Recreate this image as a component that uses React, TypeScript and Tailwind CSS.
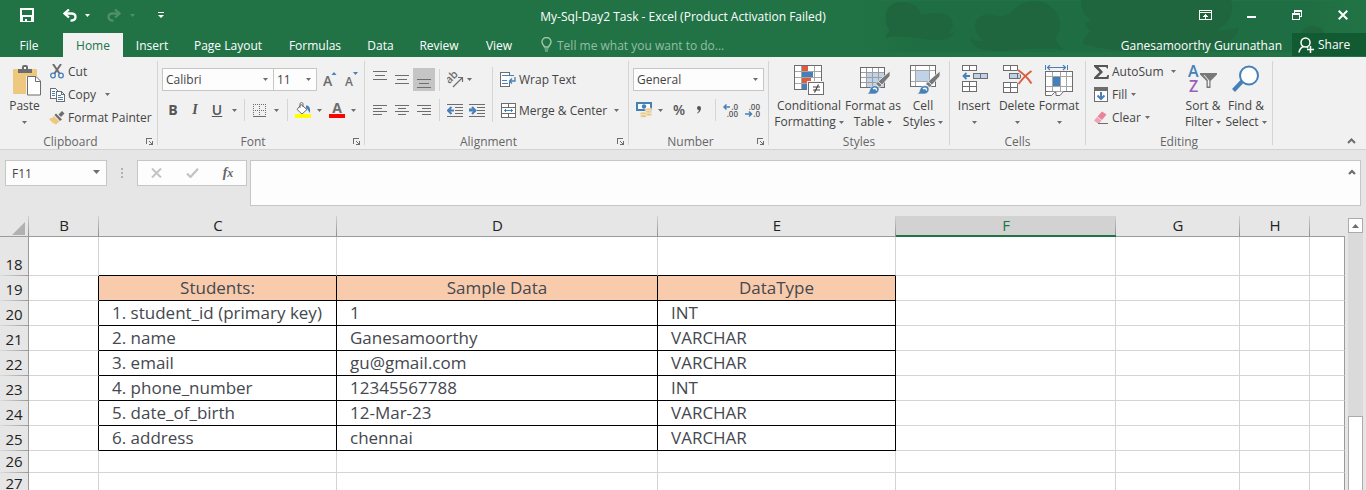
import type { ReactNode } from 'react';

type IconProps = { w: number; h: number; children: ReactNode; soft?: boolean; className?: string };

const GRAY = '#6d6d6d';
const BLUE = '#4680b9';
const TAN = '#edc87e';

function Icon({ w, h, children, soft, className = '' }: IconProps) {
  return (
    <svg
      aria-hidden="true"
      width={w}
      height={h}
      viewBox={`0 0 ${w} ${h}`}
      fill="none"
      shapeRendering={soft ? 'auto' : 'crispEdges'}
      className={`shrink-0 ${className}`}
    >
      {children}
    </svg>
  );
}

function Caret({ color = GRAY, className = '' }: { color?: string; className?: string }) {
  return (
    <Icon w={5} h={3} soft className={className}>
      <path d="M0 0h5L2.5 3z" fill={color} />
    </Icon>
  );
}

function CaretButton({ label, className = '' }: { label: string; className?: string }) {
  return (
    <button aria-label={label} className={`flex h-5 w-[5px] shrink-0 items-center justify-center ${className}`}>
      <Caret />
    </button>
  );
}

function IconButton({ label, children, className = '' }: { label: string; children: ReactNode; className?: string }) {
  return (
    <button aria-label={label} className={`flex shrink-0 items-center justify-center ${className}`}>
      {children}
    </button>
  );
}

function Sep({ className = 'h-[22px]' }: { className?: string }) {
  return <div className={`w-px shrink-0 bg-[#d5d5d5] ${className}`} />;
}

function Lines({ widths, align }: { widths: number[]; align: 'l' | 'c' | 'r' }) {
  const pitch = widths.length === 3 ? 4 : 3;
  return (
    <Icon w={14} h={(widths.length - 1) * pitch + 1}>
      {widths.map((w, i) => (
        <rect key={i} x={align === 'l' ? 0 : align === 'r' ? 14 - w : (14 - w) / 2} y={i * pitch} width={w} height="1" fill={GRAY} />
      ))}
    </Icon>
  );
}

function Group({
  title,
  launcher,
  children,
  className,
}: {
  title: string;
  launcher?: boolean;
  children: ReactNode;
  className: string;
}) {
  return (
    <section aria-label={title} className={`flex shrink-0 flex-col ${className}`}>
      <div className="flex h-[88px]">
        <div className="flex h-[76px] min-w-0 flex-1">{children}</div>
        <div className="mt-1 h-[84px] w-px bg-[#d5d5d5]" />
      </div>
      <div className="-mt-3 flex h-4 items-center pr-px">
        <span className="flex-1 pt-px text-center text-[#666666]">{title}</span>
        {launcher && (
          <button aria-label={`${title} settings`} className="flex w-4 justify-center">
            <Icon w={7} h={7}>
              <path d="M.5 6V.5H6" stroke={GRAY} />
              <path d="M7 3v4H3V6h2V5H4V4H3V3h1v1h1v1h1V3z" fill={GRAY} />
            </Icon>
          </button>
        )}
      </div>
    </section>
  );
}

function SmallButton({ icon, label, caret, gap = 'ml-1' }: { icon: ReactNode; label: string; caret?: boolean; gap?: string }) {
  return (
    <button className="flex h-[23px] items-center whitespace-nowrap">
      <span className="flex w-4 justify-center">{icon}</span>
      <span className="ml-[3px]">{label}</span>
      {caret && <Caret className={gap} />}
    </button>
  );
}

function BigButton({ icon, lines, className }: { icon: ReactNode; lines: [string, string?]; className: string }) {
  return (
    <button className={`flex shrink-0 flex-col items-center pt-2 leading-4 whitespace-nowrap ${className}`}>
      <span className="flex h-[33px] items-start justify-center">{icon}</span>
      <span>{lines[0]}</span>
      <span className="flex h-4 items-center justify-center gap-[3px]">
        {lines[1]}
        <Caret />
      </span>
    </button>
  );
}

function Combo({ label, value, options, className }: { label: string; value: string; options: string[]; className: string }) {
  return (
    <div className={`grid h-[23px] shrink-0 grid-cols-1 items-center border border-[#c6c6c6] bg-[#fdfdfd] ${className}`}>
      <select
        aria-label={label}
        defaultValue={value}
        className="col-start-1 row-start-1 h-full w-full appearance-none bg-transparent pl-[3px] text-xs text-[#444444] outline-none"
      >
        {options.map((o) => (
          <option key={o}>{o}</option>
        ))}
      </select>
      <Caret className="pointer-events-none col-start-1 row-start-1 mr-[5px] justify-self-end" />
    </div>
  );
}

/* ---------- icons ---------- */

const SaveIcon = (
  <Icon w={14} h={14}>
    <path d="M0 0h14v14H0zM2 2v5h10V2z" fill="#fff" fillRule="evenodd" />
    <path d="M3 9h8v4H3z" fill="#217346" />
    <path d="M5 11h2v3H5z" fill="#fff" />
  </Icon>
);

const UndoIcon = (
  <Icon w={14} h={13} soft>
    <path d="M1.5 4.5h6.8c2.4 0 4.2 1.2 4.2 3.5S10.700 11.600 7.500 11.600" stroke="currentColor" strokeWidth="2.300" />
    <path d="M6 .5l-4.500 4 4.500 4" stroke="currentColor" strokeWidth="2.300" />
  </Icon>
);

const PasteIcon = (
  <Icon w={32} h={32} soft>
    <rect x="4" y="4" width="24" height="25" rx="1" fill={TAN} />
    <path d="M9 8V4h4V2a2 2 0 0 1 2-2h2a2 2 0 0 1 2 2v2h4v4z" fill={GRAY} />
    <rect x="15" y="2" width="2" height="2" fill="#fff" />
    <path d="M17 11h10l5 5v15H17z" fill="#f1f1f1" />
    <path d="M18.500 11.500h8.500l4.500 4.500v14H18.500z" fill="#fff" stroke={GRAY} />
    <path d="M26.500 11.500v5h5" stroke={GRAY} />
  </Icon>
);

const CutIcon = (
  <Icon w={14} h={15} soft>
    <path d="M3 0l6.500 9.500M11 0L4.500 9.500" stroke={GRAY} strokeWidth="2" />
    <circle cx="3" cy="11.500" r="2.300" stroke={BLUE} strokeWidth="1.300" />
    <circle cx="11" cy="11.500" r="2.300" stroke={BLUE} strokeWidth="1.300" />
  </Icon>
);

const CopyIcon = (
  <Icon w={15} h={14}>
    <path d="M.5.5h5l3 3v7h-8z" fill="#fff" stroke={GRAY} />
    <path d="M2 3.500h3M2 5.500h3M2 7.500h3" stroke={BLUE} />
    <path d="M6.500 3.500h5l3 3v7h-8z" fill="#fff" stroke={GRAY} />
    <path d="M11.500 3.500v3h3" stroke={GRAY} />
    <path d="M8 7.500h3M8 9.500h5M8 11.500h5" stroke={BLUE} />
  </Icon>
);

const PainterIcon = (
  <Icon w={16} h={14} soft>
    <path d="M9.500 3.500L13 0l2.500 2.500-3.500 3.500z" fill={GRAY} />
    <path d="M7 2.500l6 6-2 1.500-5.500-6z" fill={GRAY} />
    <path d="M5 5l5.500 5.500L7 13.500C4 12.500 1.500 10.500 0 7.500 2 7.500 3.500 7 5 5z" fill={TAN} />
  </Icon>
);

const BordersIcon = (
  <Icon w={13} h={13}>
    <path d="M.5 0v12M6.500 0v12M12.500 0v12M0 .5h13M0 6.500h13" stroke={GRAY} strokeDasharray="1 1" />
    <path d="M0 12.500h13" stroke={GRAY} />
  </Icon>
);

const FillColorIcon = (
  <Icon w={16} h={16} soft>
    <path d="M6 2.500l6 5L7 12 2 7.500z" fill="#fff" stroke={GRAY} />
    <path d="M5 6V2c0-2 3-2 3 0v3" stroke={GRAY} />
    <path d="M11 3.500c3.500 0 4.500 2.500 4 7.500-1-1-1.500-3-4-5z" fill={BLUE} />
    <rect y="12" width="16" height="4" fill="#ffff00" />
  </Icon>
);

const OrientationIcon = (
  <Icon w={17} h={16} soft>
    <text x="0" y="9" transform="rotate(-45 5 8)" fontSize="11" fontWeight="600" fontFamily="Open Sans, sans-serif" fill={GRAY}>
      ab
    </text>
    <path d="M6 15l9-9M11 5.500h4.500V10" stroke={GRAY} strokeWidth="1.200" />
  </Icon>
);

function IndentIcon({ right }: { right?: boolean }) {
  return (
    <Icon w={16} h={13}>
      <path d="M0 .5h16M8 3.500h8M8 6.500h8M8 9.500h8M0 12.500h16" stroke={GRAY} />
      {right ? (
        <path d="M0 5.500h3.500M3 3l3.500 3.500L3 10M0 6.500h6" stroke={BLUE} strokeWidth="2" shapeRendering="auto" />
      ) : (
        <path d="M7 6.500H1.500M4.500 3L1 6.500 4.500 10" stroke={BLUE} strokeWidth="2" shapeRendering="auto" />
      )}
    </Icon>
  );
}

const WrapIcon = (
  <Icon w={16} h={15} soft>
    <path d="M.5.5h9v14h-9z" stroke={GRAY} fill="#fff" shapeRendering="crispEdges" />
    <rect x="9" y="4" width="2" height="6" fill="#f1f1f1" />
    <path d="M2 3.500h12M2 8.500h5M2 11.500h6" stroke={BLUE} shapeRendering="crispEdges" />
    <path d="M15 5v4h-5M12 6.500L9.500 9l2.500 2.500" stroke={BLUE} strokeWidth="1.300" />
  </Icon>
);

const MergeIcon = (
  <Icon w={15} h={15}>
    <path d="M.5.5h14v14H.5zM.5 4.500h14M.5 10.500h14M7.500.5v4M7.500 10.500v4" fill="#fff" stroke={GRAY} />
    <path d="M3 7.500h9M4.500 6v3M10.500 6v3" stroke={BLUE} />
  </Icon>
);

const MoneyIcon = (
  <Icon w={17} h={16} soft>
    <path d="M0 0h16v9H0z" fill={BLUE} shapeRendering="crispEdges" />
    <path d="M2 2h12v5H2z" fill="#fff" />
    <circle cx="8" cy="4.500" r="2.200" fill={BLUE} />
    <ellipse cx="12.500" cy="7.500" rx="3.500" ry="1.600" fill={TAN} stroke="#f1f1f1" strokeWidth=".7" />
    <ellipse cx="12.500" cy="10" rx="3.500" ry="1.600" fill={TAN} stroke="#f1f1f1" strokeWidth=".7" />
    <ellipse cx="12.500" cy="12.500" rx="3.500" ry="1.600" fill={TAN} stroke="#f1f1f1" strokeWidth=".7" />
    <ellipse cx="7.500" cy="11.500" rx="3.500" ry="1.600" fill={TAN} stroke="#f1f1f1" strokeWidth=".7" />
    <ellipse cx="7.500" cy="14" rx="3.500" ry="1.600" fill={TAN} stroke="#f1f1f1" strokeWidth=".7" />
  </Icon>
);

function DecimalIcon({ decrease }: { decrease?: boolean }) {
  const font = { fontSize: 8, fontFamily: 'Open Sans, sans-serif', fontWeight: 600, fill: '#555555' };
  return (
    <Icon w={16} h={15} soft>
      {decrease ? (
        <>
          <text x="15" y="6.500" textAnchor="end" {...font}>.00</text>
          <text x="15" y="14" textAnchor="end" {...font}>.0</text>
          <path d="M0 11h6M4 8.500L6.500 11 4 13.500" stroke={BLUE} strokeWidth="1.500" />
        </>
      ) : (
        <>
          <text x="15" y="6.500" textAnchor="end" {...font}>.0</text>
          <text x="15" y="14" textAnchor="end" {...font}>.00</text>
          <path d="M7 4H1M3.500 1.500L1 4l2.500 2.500" stroke={BLUE} strokeWidth="1.500" />
        </>
      )}
    </Icon>
  );
}

const ConditionalIcon = (
  <Icon w={30} h={30}>
    <path d="M.5.5h27v24H.5z" fill="#fff" stroke={GRAY} />
    <path d="M7.500 1v23M20.500 1v23M1 6.500h26M1 12.500h26M1 18.500h26" stroke="#a6a6a6" />
    <path d="M8 1h6v5H8zM8 13h9v5H8z" fill="#dc5e3f" />
    <path d="M8 7h11v5H8zM8 19h5v5H8z" fill={BLUE} />
    <path d="M13 16h17v14H13z" fill="#f1f1f1" />
    <path d="M14.500 17.500h15v12h-15z" fill="#fff" stroke={GRAY} />
    <path d="M19 22h7M19 25h7M24.500 19.500l-4 8" stroke="#444" strokeWidth="1.200" shapeRendering="auto" />
  </Icon>
);

const Brush = (
  <g shapeRendering="auto">
    <path d="M30 6v5l-8 9-4-3.500z" fill="#787878" stroke="#f1f1f1" strokeWidth=".8" />
    <path d="M18 16.500l4 3.500-2 2.500-4.500-3.500z" fill="#787878" stroke="#f1f1f1" strokeWidth=".8" />
    <path d="M7 29c3-1 2-4 4-6.500 2-2.500 6-2.500 7.500 0 1.500 2.500-.5 6-4 6.500z" fill={BLUE} stroke="#f1f1f1" strokeWidth=".6" />
    <path d="M13 24c2-1.500 3.500-.5 3.500 1.500" stroke="#fff" strokeWidth="1.500" />
  </g>
);

const FormatTableIcon = (
  <Icon w={31} h={30} className="ml-[5px]">
    <path d="M.5 2.500h24v20H.5z" fill="#fff" stroke={GRAY} />
    <path d="M7 8h17v14H7z" fill="#bfd2e8" />
    <path d="M6.500 3v19M12.500 3v19M18.500 3v19M1 7.500h23M1 12.500h23M1 17.500h23" stroke="#9d9d9d" />
    {Brush}
  </Icon>
);

const CellStylesIcon = (
  <Icon w={31} h={30} className="ml-[5px]">
    <path d="M.5.5h25v21H.5z" fill="#fff" stroke={GRAY} />
    <path d="M5.500 1v20M19.500 1v20M1 5.500h24M1 16.500h24" stroke="#a6a6a6" />
    <path d="M6 6h13v10H6z" fill="#bfd2e8" />
    {Brush}
  </Icon>
);

const InsertIcon = (
  <Icon w={26} h={30} className="ml-[2px]">
    <path d="M.5.5h14v5H.5zM7.500.5v5M.5 16.500h14v10H.5zM7.500 16.500v10M.5 21.500h14" fill="#fff" stroke={GRAY} />
    <path d="M11.500 8.500h14v5h-14zM18.500 8.500v5" fill="#bfd2e8" stroke={GRAY} />
    <path d="M8 11H2M4.500 8L1.500 11l3 3" stroke={BLUE} strokeWidth="1.800" shapeRendering="auto" />
  </Icon>
);

const DeleteIcon = (
  <Icon w={30} h={30} className="ml-[2px]">
    <path d="M.5.5h14v5H.5zM7.500.5v5M.5 17.500h14v10H.5zM7.500 17.500v10M.5 22.500h14" fill="#fff" stroke={GRAY} />
    <path d="M6.500 8.500h11v5h-11zM14.500 8.500v5" fill="#bfd2e8" stroke={GRAY} />
    <path d="M15 5c5 3.500 10 8 13.500 13.500M28.500 6C24 9 20 13 15.500 19" stroke="#f1f1f1" strokeWidth="4" shapeRendering="auto" />
    <path d="M15 5c5 3.500 10 8 13.500 13.500M28.500 6C24 9 20 13 15.500 19" stroke="#dc5e3f" strokeWidth="2" shapeRendering="auto" />
  </Icon>
);

const FormatIcon = (
  <Icon w={29} h={32}>
    <path d="M.5 0v5M22.500 0v5" stroke={BLUE} />
    <path d="M2 2.500h19M5 0L2.500 2.500 5 5M18 0l2.500 2.500L18 5" stroke={BLUE} strokeWidth="1.200" shapeRendering="auto" />
    <path d="M.5 6.500h27v20H.5z" fill="#fff" stroke={GRAY} />
    <path d="M7.500 7v19M15.500 7v19M21.500 7v19M1 11.500h26M1 21.500h26" stroke="#a6a6a6" />
    <path d="M8 12h7v9H8z" fill={BLUE} />
    <path d="M.5 27v3.500h6l3-3h1.500v3h4l3.500-4" stroke={GRAY} fill="#fff" shapeRendering="auto" />
  </Icon>
);

const SumIcon = (
  <Icon w={15} h={14} soft>
    <path d="M0 0h14v3.500h-1L12 2H4.500L9 7l-5 5h8.500l1-2H15l-.5 4H0v-1.500L5.500 7 0 1.500z" fill="#555" />
  </Icon>
);

const FillIcon = (
  <Icon w={14} h={15}>
    <path d="M.5.5h13v14H.5z" fill="#fff" stroke={GRAY} />
    <path d="M0 0h14v4H0z" fill={GRAY} />
    <path d="M7 5v7M3.500 8.500L7 12l3.500-3.500" stroke={BLUE} strokeWidth="2" shapeRendering="auto" />
  </Icon>
);

const ClearIcon = (
  <Icon w={15} h={13} soft>
    <path d="M8 .5L12.500 3.500 8 9 3.500 5.500z" fill="#e8839a" />
    <path d="M3 6l4.500 3.500-2 2.500H3L0 9.500z" fill="#efa3b4" />
    <path d="M4 12.500h10" stroke={GRAY} />
  </Icon>
);

const SortIcon = (
  <Icon w={30} h={30} soft>
    <text x="0" y="12" fontSize="16" fontWeight="600" fontFamily="Open Sans, sans-serif" fill={BLUE}>A</text>
    <text x="1" y="27" fontSize="16" fontWeight="600" fontFamily="Open Sans, sans-serif" fill="#9a5fb8">Z</text>
    <path d="M12 8h17v1.500L22.500 16v7h-4v-7L12 9.500z" fill="#787878" />
    <path d="M15.500 10l4.300 5v6.500h1.500v-6L16.500 10z" fill="#f1f1f1" />
  </Icon>
);

const FindIcon = (
  <Icon w={28} h={28} soft>
    <path d="M10.500 16L1.500 25.500" stroke={BLUE} strokeWidth="4" />
    <circle cx="17" cy="10.500" r="9" fill="#fdfdfd" stroke={BLUE} strokeWidth="2" />
  </Icon>
);

/* ---------- window chrome ---------- */

function Clouds() {
  return (
    <svg aria-hidden="true" width="516" height="57" viewBox="0 0 516 57" className="pointer-events-none absolute top-0 right-0">
      <defs>
        <linearGradient id="haze" x1="0" x2="1" y1="0" y2="0">
          <stop offset="0" stopColor="#1f6d42" stopOpacity="0" />
          <stop offset=".15" stopColor="#1f6d42" />
          <stop offset=".85" stopColor="#1f6d42" />
          <stop offset="1" stopColor="#1f6d42" stopOpacity="0" />
        </linearGradient>
      </defs>
      <rect width="516" height="51" y="1" fill="url(#haze)" />
      <g fill="#1f663e">
        <path d="M36 22C34 8 42 2 52 2s17 5 19 13c8-3 28-3 31 5 3 9-4 13-3 14l6-2c-2 8-20 9-32 7-10-2-24-4-37-1 0-3 1-5 4-7-2-3-4-6-4-9z" />
        <path d="M125 26c0-8 8-13 17-11 7 2 10 2 18-1C168 4 178 0 188 1c12 2 22 12 22 24 0 6-2 10-5 13l8 12c-20-4-42 0-62 1-16 0-28-2-31-12 6 2 10 2 14 2-5-4-9-9-9-15z" />
        <path d="M231 0h150c4 12-2 26-16 30 8 1 16 0 24-3-2 16-20 18-40 20-36 4-76 8-116-3 1-6 4-10 8-13-4-2-6-5-6-8 4-1 6-2 6-3-8-6-10-12-10-20z" />
        <path d="M452 33c0-9 22-9 22 0z" />
      </g>
    </svg>
  );
}

const tabs: [string, string][] = [
  ['Insert', 'w-[58px]'],
  ['Page Layout', 'w-[94px]'],
  ['Formulas', 'w-[80px]'],
  ['Data', 'w-[51px]'],
  ['Review', 'w-[66px]'],
  ['View', 'w-[54px]'],
];

function Header() {
  return (
    <header className="relative shrink-0 bg-[#217346] text-white">
      <Clouds />
      <div className="relative grid h-[33px] grid-cols-[1fr_auto_1fr]">
        <div className="flex items-center pb-[3px] pl-5">
          <IconButton label="Save">{SaveIcon}</IconButton>
          <IconButton label="Undo" className="ml-[29px]">{UndoIcon}</IconButton>
          <IconButton label="Undo history" className="ml-2"><Caret color="#fff" /></IconButton>
          <IconButton label="Redo" className="ml-[17px] -scale-x-100 text-[#4f8f6b]">{UndoIcon}</IconButton>
          <IconButton label="Redo history" className="ml-[9px]"><Caret color="#4f8f6b" /></IconButton>
          <IconButton label="Customize Quick Access Toolbar" className="ml-[23px]">
            <Icon w={6} h={6} soft>
              <path d="M0 0h6v1H0zM0 3h6L3 6z" fill="#fff" />
            </Icon>
          </IconButton>
        </div>
        <h1 className="flex items-center pt-px text-xs">My-Sql-Day2 Task - Excel (Product Activation Failed)</h1>
        <div className="flex items-center justify-end pb-[3px]">
          <IconButton label="Ribbon display options" className="h-full w-[46px]">
            <Icon w={13} h={10}>
              <path d="M.5.5h12v9H.5zM1 2.500h11" stroke="#fff" />
              <path d="M6.500 4v5M4 6h5M5 5h3" stroke="#fff" />
            </Icon>
          </IconButton>
          <IconButton label="Minimize" className="h-full w-[46px]">
            <Icon w={9} h={5}><rect y="3" width="9" height="2" fill="#fff" /></Icon>
          </IconButton>
          <IconButton label="Restore" className="h-full w-[46px]">
            <Icon w={10} h={10}>
              <path d="M2.500 3V.5h7v6H7M2 1.500h8M.5 3.500h7v6h-7zM0 4.500h8" stroke="#fff" />
            </Icon>
          </IconButton>
          <IconButton label="Close" className="h-full w-[46px]">
            <Icon w={10} h={10} soft>
              <path d="M.7.7l8.600 8.600M9.300.7L.7 9.300" stroke="#fff" strokeWidth="2" />
            </Icon>
          </IconButton>
        </div>
      </div>
      <nav aria-label="Ribbon tabs" className="relative flex h-6 text-xs">
        <button className="mr-[5px] w-[58px] pt-px">File</button>
        <button className="w-[60px] bg-[#f1f1f1] pt-px text-[#217346]">Home</button>
        {tabs.map(([name, width]) => (
          <button key={name} className={`${width} pt-px whitespace-nowrap`}>{name}</button>
        ))}
        <div className="ml-[15px] flex flex-1 items-center gap-[5px]">
          <Icon w={11} h={15} soft className="mb-[2px]">
            <path d="M3.500 10C3 8 1 7.500 1 5a4.500 4.500 0 0 1 9 0c0 2.500-2 3-2.500 5z" stroke="#a0c7b0" strokeWidth="1.400" />
            <path d="M3.500 12h4M4 14h3" stroke="#a0c7b0" strokeWidth="1.200" />
          </Icon>
          <input
            aria-label="Tell me what you want to do"
            placeholder="Tell me what you want to do..."
            className="h-6 w-48 bg-transparent pt-px text-xs outline-none placeholder:text-[#93bfa5]"
          />
        </div>
        <button className="pt-px pr-[10px] pl-2">Ganesamoorthy Gurunathan</button>
        <button className="mb-px flex w-[74px] items-center gap-1 bg-[#125a31] pt-px pl-[6px]">
          <Icon w={16} h={16} soft>
            <circle cx="7.500" cy="5.500" r="4.500" stroke="#fff" strokeWidth="1.500" />
            <path d="M5.500 9.500C3 10.500 1.500 12.500 1 15.500M9 10l1 1M12.500 9v7M9 12.500h7" stroke="#fff" strokeWidth="1.500" />
          </Icon>
          Share
        </button>
      </nav>
    </header>
  );
}

function Ribbon() {
  return (
    <div className="flex h-[93px] shrink-0 border-b border-[#d2d2d2] bg-[#f1f1f1] text-xs text-[#444444]">
      <Group title="Clipboard" launcher className="w-[158px]">
        <BigButton className="w-[49px]" icon={PasteIcon} lines={['Paste']} />
        <div className="flex flex-col pt-[3px]">
          <SmallButton icon={CutIcon} label="Cut" />
          <SmallButton icon={CopyIcon} label="Copy" caret gap="ml-[9px]" />
          <SmallButton icon={PainterIcon} label="Format Painter" />
        </div>
      </Group>

      <Group title="Font" launcher className="w-[207px]">
        <div className="flex flex-col gap-[7px] pt-[11px] pl-1">
          <div className="flex items-center">
            <Combo label="Font" value="Calibri" options={['Calibri', 'Arial', 'Cambria']} className="w-[112px]" />
            <Combo label="Font size" value="11" options={['10', '11', '12', '14']} className="-ml-px w-[44px]" />
            <IconButton label="Increase font size" className="ml-[6px]">
              <Icon w={14} h={15} soft>
                <path d="M11 0l2.500 3h-5z" fill={BLUE} />
                <text x="0" y="14" fontSize="14" fontWeight="600" fontFamily="Open Sans, sans-serif" fill={GRAY}>A</text>
              </Icon>
            </IconButton>
            <IconButton label="Decrease font size" className="ml-2">
              <Icon w={13} h={15} soft>
                <path d="M10.500 3L13 0H8z" fill={BLUE} />
                <text x="0" y="14" fontSize="12" fontWeight="600" fontFamily="Open Sans, sans-serif" fill={GRAY}>A</text>
              </Icon>
            </IconButton>
          </div>
          <div className="flex h-6 items-center text-sm text-[#555555]">
            <button aria-label="Bold" className="w-[22px] text-center font-bold">B</button>
            <button aria-label="Italic" className="w-[22px] text-center font-['Liberation_Serif',serif] font-bold italic">I</button>
            <button aria-label="Underline" className="w-[22px] text-center font-semibold underline">U</button>
            <CaretButton label="Underline style" className="ml-1" />
            <Sep className="ml-[7px] h-[22px]" />
            <IconButton label="Borders" className="ml-2">{BordersIcon}</IconButton>
            <CaretButton label="Border style" className="ml-2" />
            <Sep className="ml-2 h-[22px]" />
            <IconButton label="Fill color" className="ml-[7px]">{FillColorIcon}</IconButton>
            <CaretButton label="Fill palette" className="ml-[6px]" />
            <IconButton label="Font color" className="ml-[7px]">
              <Icon w={16} h={16} soft>
                <text x="8" y="11" textAnchor="middle" fontSize="14" fontWeight="700" fontFamily="Open Sans, sans-serif" fill={GRAY}>A</text>
                <rect y="12" width="16" height="4" fill="#ff0000" />
              </Icon>
            </IconButton>
            <CaretButton label="Font palette" className="ml-[6px]" />
          </div>
        </div>
      </Group>

      <Group title="Alignment" launcher className="w-[264px]">
        <div className="flex w-[127px] flex-col gap-[7px] pt-[11px] pl-1">
          <div className="flex h-[23px] items-center">
            <IconButton label="Top align" className="h-full w-[22px] pb-[9px]"><Lines widths={[14, 10, 14]} align="c" /></IconButton>
            <IconButton label="Middle align" className="h-full w-[22px]"><Lines widths={[14, 10, 14]} align="c" /></IconButton>
            <IconButton label="Bottom align" className="h-full w-[22px] bg-[#c5c5c5] pt-[7px]"><Lines widths={[14, 10, 14]} align="c" /></IconButton>
            <Sep className="ml-1 h-[22px]" />
            <IconButton label="Orientation" className="ml-[7px]">{OrientationIcon}</IconButton>
            <CaretButton label="Orientation options" className="ml-[3px]" />
          </div>
          <div className="flex h-6 items-center">
            <IconButton label="Align left" className="h-full w-[22px]"><Lines widths={[14, 9, 14, 9]} align="l" /></IconButton>
            <IconButton label="Center" className="h-full w-[22px]"><Lines widths={[14, 8, 14, 8]} align="c" /></IconButton>
            <IconButton label="Align right" className="h-full w-[22px]"><Lines widths={[14, 9, 14, 9]} align="r" /></IconButton>
            <Sep className="ml-1 h-[22px]" />
            <IconButton label="Decrease indent" className="ml-[7px]"><IndentIcon /></IconButton>
            <IconButton label="Increase indent" className="ml-[6px]"><IndentIcon right /></IconButton>
          </div>
        </div>
        <Sep className="mt-[10px] h-[55px]" />
        <div className="flex flex-1 flex-col gap-2 pt-[11px] pl-[7px]">
          <SmallButton icon={WrapIcon} label="Wrap Text" />
          <SmallButton icon={MergeIcon} label="Merge & Center" caret gap="ml-[7px]" />
        </div>
      </Group>

      <Group title="Number" launcher className="w-[140px]">
        <div className="flex flex-col gap-[7px] pt-[11px] pl-1">
          <Combo label="Number format" value="General" options={['General', 'Number', 'Currency']} className="w-[131px]" />
          <div className="flex h-6 items-center pl-[3px]">
            <IconButton label="Accounting format">{MoneyIcon}</IconButton>
            <CaretButton label="Currency" className="ml-[5px]" />
            <button aria-label="Percent style" className="ml-[9px] w-[14px] text-sm font-semibold text-[#555555]">%</button>
            <IconButton label="Comma style" className="ml-[10px]">
              <Icon w={6} h={8} soft>
                <path d="M1 2a2 2 0 0 1 4 0c0 2-1 4-3.500 5.500L1 7c1.300-1 2-2 1.800-3C1.700 4 1 3 1 2z" fill="#555" />
              </Icon>
            </IconButton>
            <Sep className="ml-[13px] h-[22px]" />
            <IconButton label="Increase decimal" className="ml-[7px]"><DecimalIcon /></IconButton>
            <IconButton label="Decrease decimal" className="ml-[6px]"><DecimalIcon decrease /></IconButton>
          </div>
        </div>
      </Group>

      <Group title="Styles" className="w-[181px]">
        <BigButton className="ml-[6px] w-[68px]" icon={ConditionalIcon} lines={['Conditional', 'Formatting']} />
        <BigButton className="w-[60px]" icon={FormatTableIcon} lines={['Format as', 'Table']} />
        <BigButton className="w-[40px]" icon={CellStylesIcon} lines={['Cell', 'Styles']} />
      </Group>

      <Group title="Cells" className="w-[136px]">
        <BigButton className="w-[48px]" icon={InsertIcon} lines={['Insert']} />
        <BigButton className="w-[38px]" icon={DeleteIcon} lines={['Delete']} />
        <BigButton className="w-[46px]" icon={FormatIcon} lines={['Format']} />
      </Group>

      <Group title="Editing" className="w-[187px]">
        <div className="flex w-[97px] flex-col pt-[3px] pl-[7px]">
          <SmallButton icon={SumIcon} label="AutoSum" caret gap="ml-[7px]" />
          <SmallButton icon={FillIcon} label="Fill" caret />
          <SmallButton icon={ClearIcon} label="Clear" caret />
        </div>
        <BigButton className="w-[40px]" icon={SortIcon} lines={['Sort &', 'Filter']} />
        <BigButton className="w-[46px]" icon={FindIcon} lines={['Find &', 'Select']} />
      </Group>

      <div className="flex flex-1 items-end justify-end pr-[10px] pb-[5px]">
        <IconButton label="Collapse the ribbon">
          <Icon w={9} h={6} soft>
            <path d="M1 5l3.500-3.500L8 5" stroke={GRAY} strokeWidth="2" />
          </Icon>
        </IconButton>
      </div>
    </div>
  );
}

function FormulaBar() {
  return (
    <div className="flex h-[66px] shrink-0 items-start bg-[#e6e6e6] pt-[10px] pr-[5px] pl-[5px]">
      <div className="flex h-[26px] w-[102px] items-center border border-[#c6c6c6] bg-[#fdfdfd] pr-[6px] pl-[6px]">
        <input
          aria-label="Name box"
          defaultValue="F11"
          className="h-6 min-w-0 flex-1 bg-transparent text-xs text-[#444444] outline-none"
        />
        <button aria-label="Named ranges">
          <Icon w={7} h={4} soft className="mb-[2px]"><path d="M0 0h7L3.500 4z" fill={GRAY} /></Icon>
        </button>
      </div>
      <div className="flex h-[26px] w-[30px] items-center justify-center">
        <Icon w={2} h={10}>
          <path d="M0 0h2v2H0zM0 4h2v2H0zM0 8h2v2H0z" fill="#b1b1b1" />
        </Icon>
      </div>
      <div className="flex h-[26px] w-[110px] border border-[#c6c6c6] bg-[#fdfdfd]">
        <IconButton label="Cancel" className="w-9">
          <Icon w={11} h={10} soft><path d="M1 .5l9 9M10 .5l-9 9" stroke="#c3c3c3" strokeWidth="2" /></Icon>
        </IconButton>
        <IconButton label="Enter" className="w-9">
          <Icon w={13} h={10} soft><path d="M1 5.500l3.500 3.500L12 .7" stroke="#c3c3c3" strokeWidth="2.200" /></Icon>
        </IconButton>
        <button aria-label="Insert function" className="w-9 font-['Liberation_Serif',serif] text-sm leading-none font-bold text-[#666666] italic">
          f<span className="text-xs">x</span>
        </button>
      </div>
      <div className="ml-[3px] flex h-[46px] flex-1 items-start border border-[#c6c6c6] bg-[#fdfdfd]">
        <textarea aria-label="Formula" className="h-full flex-1 resize-none bg-transparent px-1 text-xs outline-none" />
        <IconButton label="Collapse formula bar" className="mt-2 mr-1">
          <Icon w={8} h={6} soft><path d="M1 5l3-3 3 3" stroke={GRAY} strokeWidth="2.200" /></Icon>
        </IconButton>
      </div>
    </div>
  );
}

/* ---------- sheet ---------- */

const columns: [string, string][] = [
  ['B', 'w-[70px]'],
  ['C', 'w-[238px]'],
  ['D', 'w-[321px]'],
  ['E', 'w-[238px]'],
  ['F', 'w-[220px]'],
  ['G', 'w-[124px]'],
  ['H', 'w-[70px]'],
];

const rows: { n: number; height: string; cells?: string[]; head?: boolean }[] = [
  { n: 18, height: 'h-[39px]' },
  { n: 19, height: 'h-[25px]', cells: ['Students:', 'Sample Data', 'DataType'], head: true },
  { n: 20, height: 'h-[25px]', cells: ['1. student_id (primary key)', '1', 'INT'] },
  { n: 21, height: 'h-[25px]', cells: ['2. name', 'Ganesamoorthy', 'VARCHAR'] },
  { n: 22, height: 'h-[25px]', cells: ['3. email', 'gu@gmail.com', 'VARCHAR'] },
  { n: 23, height: 'h-[25px]', cells: ['4. phone_number', '12345567788', 'INT'] },
  { n: 24, height: 'h-[25px]', cells: ['5. date_of_birth', '12-Mar-23', 'VARCHAR'] },
  { n: 25, height: 'h-[25px]', cells: ['6. address', 'chennai', 'VARCHAR'] },
  { n: 26, height: 'h-[22px]' },
  { n: 27, height: 'h-[22px]' },
];

const colEdge = 'bg-[linear-gradient(to_bottom,#d0d0d0,#8f8f8f)] bg-[length:1px_100%] bg-right bg-no-repeat';
const rowEdge = 'bg-[linear-gradient(to_right,#dcdcdc,#9b9b9b)] bg-[length:100%_1px] bg-bottom bg-no-repeat';

function Sheet() {
  return (
    <main className="flex min-h-0 flex-1 overflow-hidden bg-[#e6e6e6]">
      <div className="min-w-0 flex-1 overflow-hidden">
        <table className="w-full table-fixed border-separate border-spacing-0">
          <thead>
            <tr className="h-[21px] text-[15px] leading-[19px] text-[#222222]">
              <th aria-label="Select all" className={`w-[29px] border-b border-[#9b9b9b] p-0 ${colEdge}`}>
                <Icon w={13} h={13} soft className="mt-1 ml-3"><path d="M13 0v13H0z" fill="#b1b1b1" /></Icon>
              </th>
              {columns.map(([name, width]) => (
                <th
                  key={name}
                  scope="col"
                  className={`${width} ${colEdge} p-0 align-top font-normal ${
                    name === 'F' ? 'border-b-2 border-[#217346] bg-[#d2d2d2] text-[#217346]' : 'border-b border-[#9b9b9b]'
                  }`}
                >
                  {name}
                </th>
              ))}
              <th aria-label="I" className="border-b border-[#9b9b9b] p-0" />
            </tr>
          </thead>
          <tbody>
            {rows.map(({ n, height, cells, head }) => (
              <tr key={n} className={height}>
                <th
                  scope="row"
                  className={`border-r border-[#9b9b9b] bg-[#e6e6e6] p-0 pb-[3px] align-bottom text-[15px] leading-[18px] font-normal text-[#222222] ${rowEdge}`}
                >
                  {n}
                </th>
                {columns.map(([col], c) => {
                  const inTable = c >= 1 && c <= 3;
                  const right = cells && c <= 3 ? 'border-r-black' : 'border-r-[#d4d4d4]';
                  const bottom = inTable && (cells || n === 18) ? 'border-b-black' : 'border-b-[#d4d4d4]';
                  const look = head && inTable ? 'bg-[#f8cbad] text-center' : 'bg-white text-left pl-[13px]';
                  return (
                    <td
                      key={col}
                      className={`border-r border-b p-0 text-[17px] leading-6 whitespace-nowrap text-[#44484f] ${right} ${bottom} ${look}`}
                    >
                      {inTable && cells ? cells[c - 1] : null}
                    </td>
                  );
                })}
                <td className="border-r border-b border-r-[#9b9b9b] border-b-[#d4d4d4] bg-white p-0" />
              </tr>
            ))}
          </tbody>
        </table>
      </div>
      <div role="scrollbar" aria-label="Vertical" aria-controls="root" aria-valuenow={60} className="mt-[2px] flex w-[21px] shrink-0 flex-col px-[3px]">
        <IconButton label="Scroll up" className="h-[15px] border border-[#ababab] bg-[#fdfdfd]">
          <Icon w={7} h={4} soft><path d="M0 4h7L3.500 0z" fill={GRAY} /></Icon>
        </IconButton>
        <div className="flex flex-1 flex-col bg-[#dadada] pt-[183px]">
          <div className="flex-1 border border-b-0 border-[#ababab] bg-white" />
        </div>
      </div>
    </main>
  );
}

export default function App() {
  return (
    <div className="flex h-screen flex-col overflow-hidden bg-[#e6e6e6] font-['Open_Sans','Noto_Sans',sans-serif]">
      <Header />
      <Ribbon />
      <FormulaBar />
      <Sheet />
    </div>
  );
}
